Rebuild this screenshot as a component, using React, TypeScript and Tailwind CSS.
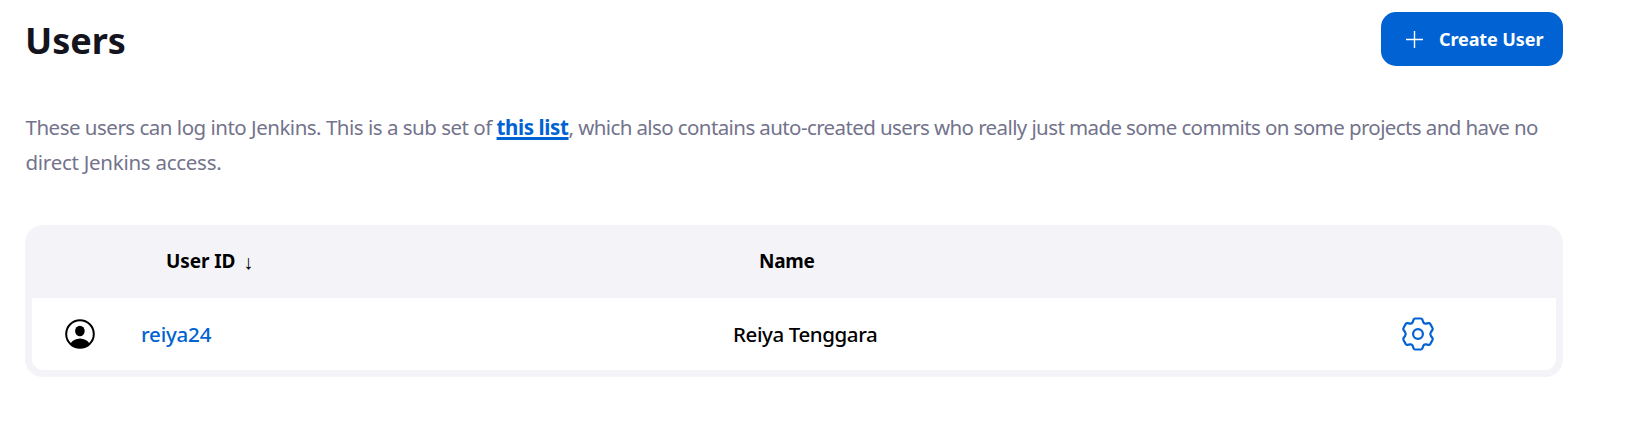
function PersonIcon() {
  return (
    <svg viewBox="0 0 30 30" className="size-[30px]" aria-hidden="true">
      <defs>
        <clipPath id="person-clip">
          <circle cx="15" cy="15" r="14" />
        </clipPath>
      </defs>
      <circle cx="15" cy="15" r="13.8" fill="none" stroke="#000" strokeWidth="2" />
      <ellipse cx="14.9" cy="12" rx="4.8" ry="5.2" />
      <ellipse cx="15" cy="28" rx="10.5" ry="8.6" clipPath="url(#person-clip)" />
    </svg>
  );
}

function GearIcon() {
  return (
    <svg
      viewBox="-17 -17 34 34"
      className="size-[34px]"
      fill="none"
      stroke="#0062d3"
      strokeWidth="2.2"
      strokeLinejoin="round"
      aria-hidden="true"
    >
      <circle r="4.9" />
      <path d="M-2.9-15.5H2.9Q4-15.5 4.4-14.4L5.2-12Q6-10 8-10.4L10.4-10.9Q11.6-11.1 12.2-10.1L14.5-6Q15.1-5 14.4-4L12.9-1.9Q11.6 0 12.9 1.9L14.4 4Q15.1 5 14.5 6L12.2 10.1Q11.6 11.1 10.4 10.9L8 10.4Q6 10 5.2 12L4.4 14.4Q4 15.5 2.9 15.5H-2.9Q-4 15.5-4.4 14.4L-5.2 12Q-6 10-8 10.4L-10.4 10.9Q-11.6 11.1-12.2 10.1L-14.5 6Q-15.1 5-14.4 4L-12.9 1.9Q-11.6 0-12.9-1.9L-14.4-4Q-15.1-5-14.5-6L-12.2-10.1Q-11.6-11.1-10.4-10.9L-8-10.4Q-6-10-5.2-12L-4.4-14.4Q-4-15.5-2.9-15.5Z" />
    </svg>
  );
}

export default function App() {
  return (
    <main className="min-h-[421px] bg-white pt-3 pr-[62px] pl-[25px] font-['Noto_Sans',sans-serif] text-black">
      <header className="flex h-[54px] items-center justify-between">
        <h1 className="pt-[3px] text-[36px] leading-[54px] font-bold text-[#14141f]">Users</h1>
        <button className="flex h-[54px] w-[182px] items-center gap-4 rounded-[15px] bg-[#0062d3] pl-[25px] text-lg font-bold whitespace-nowrap text-white">
          <svg viewBox="0 0 17 17" className="size-[17px] shrink-0" stroke="currentColor" strokeWidth="1.4" aria-hidden="true">
            <path d="M8.5 0V17M0 8.5H17" />
          </svg>
          <span className="tracking-[-0.1px]">Create User</span>
        </button>
      </header>

      <p className="mt-11 pl-[0.5px] text-[20.5px] leading-[35px] whitespace-nowrap text-[#73738c]">
        <span className="tracking-[-0.5px]">These users can log into Jenkins. This is a sub set of </span>
        <a
          href="#"
          className="font-bold tracking-[-0.38px] text-[#0062d3] underline decoration-[3px] underline-offset-2 [text-decoration-skip-ink:none]"
        >
          this list
        </a>
        <span className="tracking-[-0.6px]">
          , which also contains auto-created users who really just made some commits on some projects and have no
        </span>
        <br />
        <span className="tracking-[-0.27px]">direct Jenkins access.</span>
      </p>

      <section className="mt-[45px] rounded-[18px] bg-[#f3f3f8] px-[7px] pb-[7px]">
        <div className="grid h-[73px] grid-cols-[109px_592px_630px_1fr] items-center text-[19px] font-bold">
          <span />
          <span className="flex items-center gap-2 pl-[25px]">
            <span className="tracking-[-0.1px]">User ID</span>
            <span className="font-['Liberation_Sans'] text-xl font-normal">↓</span>
          </span>
          <span className="pl-[26px] tracking-[-0.3px]">Name</span>
        </div>
        <div className="grid h-[72px] grid-cols-[109px_592px_630px_1fr] items-center rounded-b-[11px] bg-white text-[20.5px] font-medium">
          <span className="pl-[33px]">
            <PersonIcon />
          </span>
          <a href="#" className="tracking-[-0.2px] text-[#0062d3]">reiya24</a>
          <span className="tracking-[-0.4px]">Reiya Tenggara</span>
          <a href="#" className="pl-[38px]" aria-label="Configure">
            <GearIcon />
          </a>
        </div>
      </section>
    </main>
  );
}
